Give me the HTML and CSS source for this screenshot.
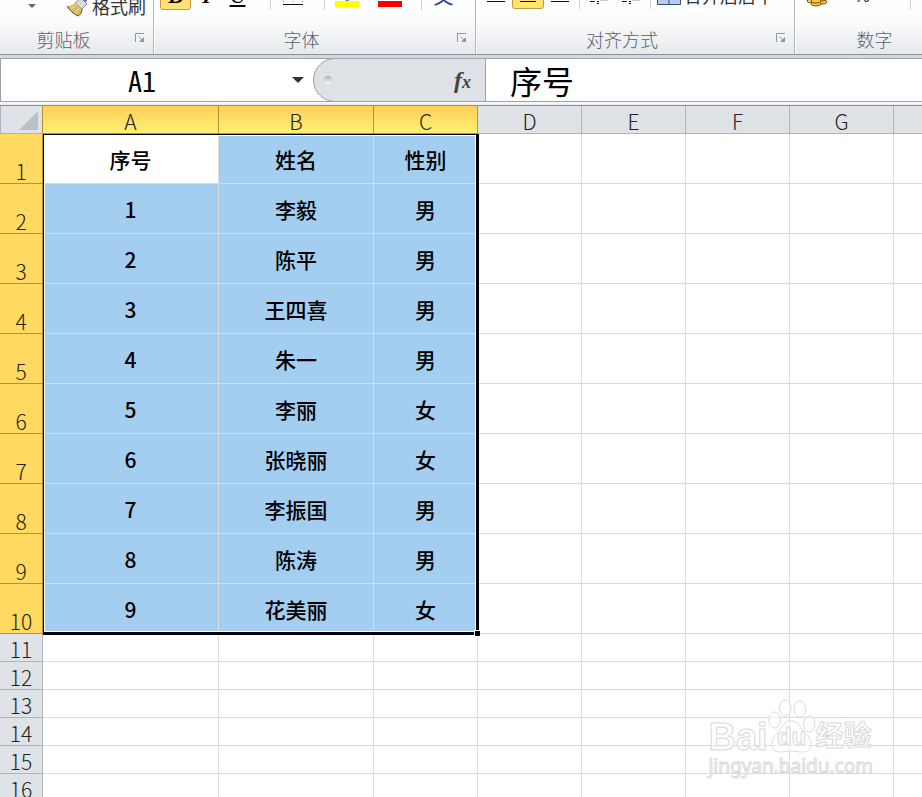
FILE: index.html
```html
<!DOCTYPE html>
<html lang="zh-CN">
<head>
  <meta charset="UTF-8">
  <meta name="viewport" content="width=device-width, initial-scale=1.0">
  <title>工作表</title>
  <link rel="stylesheet" href="styles.css">
</head>
<body>
  <svg class="defs" aria-hidden="true">
    <symbol id="launcher" viewBox="0 0 10 10">
      <path d="M0.5 9V0.5H9" fill="none" stroke="#8f959c"/>
      <path d="M3.5 3.5L7 7" fill="none" stroke="#8f959c"/>
      <path d="M9 4V9H4Z" fill="#8f959c"/>
    </symbol>
  </svg>
  <div class="app">
    <div class="ribbon">
      <section class="group group-clipboard">
        <div class="tools tools-low">
          <button class="tool tool-paste" aria-label="粘贴选项">
            <svg width="8" height="4" viewBox="0 0 8 4"><path d="M0 0H8L4 4Z" fill="#666"/></svg>
          </button>
          <button class="tool tool-text">
            <svg width="22" height="22" viewBox="0 0 22 22">
              <path d="M14 7L17 0H22L18 10Z" fill="#6c63c8"/>
              <path d="M8 8L14 3L20 9L15 14Z" fill="#d8dade" stroke="#8d8f96"/>
              <path d="M8 8L15 14C15 18 13 20 11 21C7 19 2 15 0 11C4 11 6 10 8 8Z" fill="#d6bd62"/>
              <path d="M0 11C2 15 7 19 11 21C13 20 15 18 15 14" stroke="#5d4d22" fill="none"/>
              <path d="M9 10C8 12 6 13 4 13M12 13C11 15 10 17 8 18" stroke="#f4e6a8" fill="none"/>
            </svg>
            <span>格式刷</span>
          </button>
        </div>
        <div class="group-label">
          <span>剪贴板</span>
          <button class="launcher" aria-label="剪贴板选项"><svg width="10" height="10"><use href="#launcher"/></svg></button>
        </div>
      </section>
      <section class="group group-font">
        <div class="tools">
          <button class="tool tool-letter active"><i>B</i></button>
          <button class="tool tool-letter"><i>I</i></button>
          <button class="tool tool-letter tool-underline"><u>U</u></button>
          <span class="sep sep-far"></span>
          <button class="tool tool-wide" aria-label="边框">
            <svg width="20" height="20" viewBox="0 0 20 20">
              <path d="M0 10.5H20M0.5 3V17M19.5 3V17M10 3V17" stroke="#888" stroke-dasharray="1 3" fill="none"/>
              <path d="M0 18.5H20" stroke="#111"/>
            </svg>
          </button>
          <span class="sep sep-near"></span>
          <button class="tool tool-wide" aria-label="填充颜色">
            <svg width="24" height="24" viewBox="0 0 24 24">
              <path d="M7 13L14 6L19 13L12 17Z" fill="#cbd3e2" stroke="#4a6290"/>
              <path d="M0 17H24V23H0Z" fill="#ff0"/>
            </svg>
          </button>
          <button class="tool tool-wide" aria-label="字体颜色">
            <svg width="24" height="24" viewBox="0 0 24 24"><path d="M0 17H24V23H0Z" fill="#f00"/></svg>
          </button>
          <span class="sep sep-near"></span>
          <button class="tool tool-wide tool-pinyin">文</button>
        </div>
        <div class="group-label">
          <span>字体</span>
          <button class="launcher" aria-label="字体选项"><svg width="10" height="10"><use href="#launcher"/></svg></button>
        </div>
      </section>
      <section class="group group-align">
        <div class="tools">
          <button class="tool tool-align" aria-label="左对齐">
            <svg width="18" height="18" viewBox="0 0 18 18"><path d="M0 7.5H18M0 11.5H12M0 15.5H18" stroke="#111"/></svg>
          </button>
          <button class="tool tool-align active" aria-label="居中">
            <svg width="18" height="18" viewBox="0 0 18 18"><path d="M0 7.5H18M3 11.5H15M1 15.5H17" stroke="#111"/></svg>
          </button>
          <button class="tool tool-align" aria-label="右对齐">
            <svg width="18" height="18" viewBox="0 0 18 18"><path d="M0 7.5H18M6 11.5H18M0 15.5H18" stroke="#111"/></svg>
          </button>
          <span class="sep"></span>
          <button class="tool tool-align" aria-label="减少缩进量">
            <svg width="18" height="18" viewBox="0 0 18 18">
              <path d="M10 14.5H18" stroke="#ccc"/>
              <path d="M0 15.5H5M7 15.5H9M7 17.5H9M0 13.5H3" stroke="#111"/>
            </svg>
          </button>
          <button class="tool tool-align" aria-label="增加缩进量">
            <svg width="18" height="18" viewBox="0 0 18 18">
              <path d="M10 14.5H18" stroke="#ccc"/>
              <path d="M0 15.5H5M7 15.5H9M7 17.5H9M0 13.5H3" stroke="#111"/>
            </svg>
          </button>
          <span class="sep"></span>
          <button class="tool tool-text">
            <svg width="24" height="20" viewBox="0 0 24 20">
              <path d="M0.5 0.5H23.5V19.5H0.5Z" fill="#b9cdf0" stroke="#35507f"/>
              <path d="M0 14.5H24M12 15V19" stroke="#35507f"/>
            </svg>
            <span>合并后居中</span>
          </button>
        </div>
        <div class="group-label">
          <span>对齐方式</span>
          <button class="launcher" aria-label="对齐方式选项"><svg width="10" height="10"><use href="#launcher"/></svg></button>
        </div>
      </section>
      <section class="group group-number">
        <div class="tools">
          <button class="tool tool-wide" aria-label="会计数字格式">
            <svg width="22" height="22" viewBox="0 0 22 22">
              <g fill="#f3c64c" stroke="#7a5514">
                <ellipse cx="6" cy="16" rx="5" ry="2"/>
                <ellipse cx="16" cy="17" rx="5" ry="2"/>
                <ellipse cx="16" cy="14" rx="5" ry="2"/>
                <ellipse cx="10" cy="19" rx="5" ry="2"/>
                <ellipse cx="10" cy="16" rx="5" ry="2"/>
              </g>
            </svg>
          </button>
          <button class="tool tool-wide tool-percent">%</button>
          <span class="sep sep-percent"></span>
        </div>
        <div class="group-label">
          <span>数字</span>
          <button class="launcher" aria-label="数字选项"><svg width="10" height="10"><use href="#launcher"/></svg></button>
        </div>
      </section>
    </div>

    <div class="formula-bar">
      <input class="name-box" type="text" value="A1" aria-label="名称框">
      <button class="name-drop" aria-label="名称列表">
        <svg width="12" height="6" viewBox="0 0 12 6"><path d="M0 0H12L6 6Z" fill="#333"/></svg>
      </button>
      <div class="fx-area">
        <span class="grip"></span>
        <button class="fx" aria-label="插入函数">f<small>x</small></button>
      </div>
      <input class="formula" type="text" value="序号" aria-label="编辑栏">
    </div>

    <div class="sheet">
      <table>
        <colgroup>
          <col class="col-head"><col class="col-a"><col class="col-b">
          <col class="col-n"><col class="col-n"><col class="col-n"><col class="col-n"><col class="col-n">
          <col>
        </colgroup>
        <thead>
          <tr>
            <th class="corner"><svg width="19" height="19" viewBox="0 0 19 19"><path d="M19 0V19H0Z" fill="#bbc0c4"/></svg></th>
            <th class="on">A</th><th class="on">B</th><th class="on">C</th>
            <th>D</th><th>E</th><th>F</th><th>G</th><th></th>
          </tr>
        </thead>
        <tbody class="data">
          <tr><th>1</th><td class="current">序号</td><td>姓名</td><td>性别</td><td></td><td></td><td></td><td></td><td></td></tr>
          <tr><th>2</th><td>1</td><td>李毅</td><td>男</td><td></td><td></td><td></td><td></td><td></td></tr>
          <tr><th>3</th><td>2</td><td>陈平</td><td>男</td><td></td><td></td><td></td><td></td><td></td></tr>
          <tr><th>4</th><td>3</td><td>王四喜</td><td>男</td><td></td><td></td><td></td><td></td><td></td></tr>
          <tr><th>5</th><td>4</td><td>朱一</td><td>男</td><td></td><td></td><td></td><td></td><td></td></tr>
          <tr><th>6</th><td>5</td><td>李丽</td><td>女</td><td></td><td></td><td></td><td></td><td></td></tr>
          <tr><th>7</th><td>6</td><td>张晓丽</td><td>女</td><td></td><td></td><td></td><td></td><td></td></tr>
          <tr><th>8</th><td>7</td><td>李振国</td><td>男</td><td></td><td></td><td></td><td></td><td></td></tr>
          <tr><th>9</th><td>8</td><td>陈涛</td><td>男</td><td></td><td></td><td></td><td></td><td></td></tr>
          <tr><th>10</th><td>9</td><td>花美丽</td><td>女</td><td></td><td></td><td></td><td></td><td></td></tr>
        </tbody>
        <tbody>
          <tr><th>11</th><td></td><td></td><td></td><td></td><td></td><td></td><td></td><td></td></tr>
          <tr><th>12</th><td></td><td></td><td></td><td></td><td></td><td></td><td></td><td></td></tr>
          <tr><th>13</th><td></td><td></td><td></td><td></td><td></td><td></td><td></td><td></td></tr>
          <tr><th>14</th><td></td><td></td><td></td><td></td><td></td><td></td><td></td><td></td></tr>
          <tr><th>15</th><td></td><td></td><td></td><td></td><td></td><td></td><td></td><td></td></tr>
          <tr><th>16</th><td></td><td></td><td></td><td></td><td></td><td></td><td></td><td></td></tr>
        </tbody>
      </table>
      <div class="selection"><span class="handle"></span></div>
    </div>

    <div class="watermark">
      <div class="brand">
        <span class="brand-bai">Bai</span>
        <span class="paw">
          <svg width="48" height="54" viewBox="0 0 50 54" fill="#fff" fill-opacity="0.6" stroke="#d9d9d9" preserveAspectRatio="none">
            <ellipse cx="7" cy="21" rx="6" ry="8"/>
            <ellipse cx="18" cy="9" rx="6" ry="8"/>
            <ellipse cx="33" cy="10" rx="6" ry="8"/>
            <ellipse cx="43" cy="25" rx="6" ry="8"/>
            <path d="M24 22C32 22 34 29 40 35C48 43 46 53 36 53C31 53 28 52 24 52C20 52 17 53 13 53C3 53 1 43 9 35C14 30 16 22 24 22Z"/>
          </svg>
          <span class="paw-du">du</span>
        </span>
        <span class="brand-cn">经验</span>
      </div>
      <div class="site">jingyan.baidu.com</div>
    </div>
  </div>
</body>
</html>
```
FILE: styles.css
```css
* {
  box-sizing: border-box;
}

body {
  margin: 0;
  font-family: "Noto Sans CJK SC", "Noto Sans", sans-serif;
  color: #000;
  background: #fff;
  overflow: hidden;
}

button {
  padding: 0;
  border: none;
  background: none;
  font: inherit;
  color: inherit;
}

input {
  min-width: 0;
  padding: 0;
  border: none;
  outline: none;
  background: #fff;
}

.defs {
  display: none;
}

.app {
  position: relative;
  height: 100vh;
  overflow: hidden;
}

/* Ribbon */
.ribbon {
  display: flex;
  height: 55px;
  overflow: hidden;
  background: linear-gradient(#fff, #fafbfb 40%, #e6e9ed);
  border-bottom: 1px solid #8b9097;
}

.group {
  flex: none;
  display: flex;
  flex-direction: column;
  justify-content: space-between;
  border-right: 1px solid #b4b8bd;
  box-shadow: 1px 0 #fff;
}

.group-clipboard {
  width: 154px;
}

.group-font {
  width: 322px;
  padding-left: 6px;
}

.group-align {
  width: 319px;
  padding-left: 4px;
}

.group-number {
  width: 186px;
}

.tools {
  display: flex;
  align-items: flex-end;
  height: 10px;
}

.tools-low {
  height: 20px;
}

.group-align .tools {
  height: 9px;
}

.tool {
  flex: none;
  display: flex;
  align-items: center;
  justify-content: center;
  height: 28px;
}

.tool.active {
  border: 1px solid #c29b3c;
  border-radius: 3px;
  background: linear-gradient(#fdd77a, #ffe575);
}

.tool-paste {
  width: 64px;
}

.tool-text {
  gap: 3px;
  padding-left: 3px;
  font-size: 18px;
  color: #333;
}

.tool-letter {
  width: 31px;
  font-family: "Liberation Serif", serif;
  font-size: 22px;
  font-weight: bold;
}

.tool-underline {
  font-weight: normal;
}

.tool-wide {
  width: 43px;
}

.tool-align {
  width: 32px;
}

.tool-pinyin {
  font-size: 20px;
  line-height: 24px;
  color: #2b3f9b;
}

.tool-percent {
  width: 48px;
  font-family: "Liberation Sans", sans-serif;
  font-size: 18px;
  color: #333;
}

.sep {
  flex: none;
  width: 1px;
  height: 28px;
  margin: 0 3px;
  background: #cdd0d4;
}

.sep-far {
  margin: 0 0 0 17px;
}

.sep-near {
  margin: 0 0 0 10px;
}

.sep-percent {
  margin-left: 24px;
}

.group-label {
  display: flex;
  align-items: center;
  height: 30px;
  font-size: 18px;
  font-weight: 300;
  color: #59616d;
}

.group-font .group-label {
  margin-left: -6px;
}

.group-align .group-label {
  margin-left: -4px;
}

.group-label span {
  flex: 1;
  text-align: center;
}

.launcher {
  display: flex;
  align-items: center;
  justify-content: center;
  width: 26px;
  height: 24px;
}

.launcher svg {
  display: block;
  margin-bottom: 2px;
}

/* Formula bar */
.formula-bar {
  display: flex;
  height: 51px;
  padding-bottom: 3px;
  border-top: 3px solid #d5d9df;
  border-bottom: 1px solid #8b9097;
  background: linear-gradient(#fff, #e4e8f0) bottom / 100% 3px no-repeat;
}

.name-box,
.name-drop,
.fx-area,
.formula {
  height: 44px;
  border-top: 1px solid #9da1a8;
  border-bottom: 1px solid #9da1a8;
}

.name-box {
  width: 283px;
  border-left: 1px solid #9da1a8;
  font-family: "Noto Sans Mono CJK SC", "Noto Sans CJK SC", sans-serif;
  font-size: 28px;
  text-align: center;
}

/* runs on under the rounded end of the fx area */
.name-drop {
  display: flex;
  align-items: center;
  width: 52px;
  margin-right: -22px;
  padding-left: 9px;
  background: #fff;
}

.fx-area {
  display: flex;
  align-items: center;
  justify-content: space-between;
  width: 173px;
  padding: 0 14px 0 10px;
  border: 1px solid #9da1a8;
  border-radius: 22px 0 0 22px;
  background: #dee1e6;
}

.grip {
  width: 8px;
  height: 8px;
  border-radius: 50%;
  background: linear-gradient(#a9adb2, #fff);
}

.fx {
  font: italic bold 24px "Liberation Serif", serif;
  color: #444;
}

.fx small {
  font-size: 18px;
}

.formula {
  flex: 1;
  padding-left: 24px;
  font-family: "Noto Sans CJK SC", sans-serif;
  font-size: 32px;
}

/* Sheet */
.sheet {
  position: relative;
}

table {
  width: 100%;
  table-layout: fixed;
  border-collapse: separate;
  border-spacing: 0;
}

.col-head {
  width: 43px;
}

.col-a {
  width: 176px;
}

.col-b {
  width: 155px;
}

.col-n {
  width: 104px;
}

th,
td {
  height: 28px;
  padding: 0;
  border-right: 1px solid #d9dadb;
  border-bottom: 1px solid #d9dadb;
  font-size: 21px;
  line-height: 24px;
  text-align: center;
}

th {
  border-color: #b0b4ba;
  background: #dfe2e7;
  font-weight: 300;
  color: #222;
  vertical-align: bottom;
}

th:last-child,
td:last-child {
  border-right: none;
}

th.on {
  border-color: #c08d34;
  background: linear-gradient(#ffd058, #fff075);
}

.corner {
  border-right-color: #c08d34;
  border-left: 1px solid #b0b4ba;
  padding: 4px 4px 3px 0;
  line-height: 0;
  text-align: right;
}

.data th {
  height: 50px;
  border-color: #c08d34;
  background: #ffd960;
}

.data td {
  font-weight: 500;
}

.data td:nth-child(-n+4) {
  background: #a4cef0;
}

.data td.current {
  background: #fff;
}

.selection {
  position: absolute;
  top: 28px;
  left: 43px;
  width: 436px;
  height: 501px;
  border: 1px solid #000;
  border-right-width: 3px;
  border-bottom-width: 3px;
  box-shadow: inset 0 0 0 1px #fff;
}

.handle {
  position: absolute;
  right: -4px;
  bottom: -4px;
  width: 6px;
  height: 6px;
  border: solid #fff;
  border-width: 1px 0 0 1px;
  background: #000;
}

/* Watermark */
.watermark {
  position: absolute;
  right: 49px;
  bottom: 18px;
  font-family: "Liberation Sans", "Noto Sans CJK SC", sans-serif;
  color: rgba(255, 255, 255, 0.6);
  -webkit-text-stroke: 1px #d9d9d9;
}

.brand {
  display: flex;
  align-items: flex-end;
  height: 54px;
  font-weight: bold;
  line-height: 32px;
}

.brand-bai {
  font-size: 38px;
}

.paw {
  position: relative;
  height: 54px;
}

.paw-du {
  position: absolute;
  right: 0;
  bottom: 0;
  left: 0;
  font-size: 24px;
  text-align: center;
}

.brand-cn {
  font-size: 28px;
}

.site {
  font-family: "Noto Sans", sans-serif;
  font-size: 19px;
  line-height: 26px;
}
```
